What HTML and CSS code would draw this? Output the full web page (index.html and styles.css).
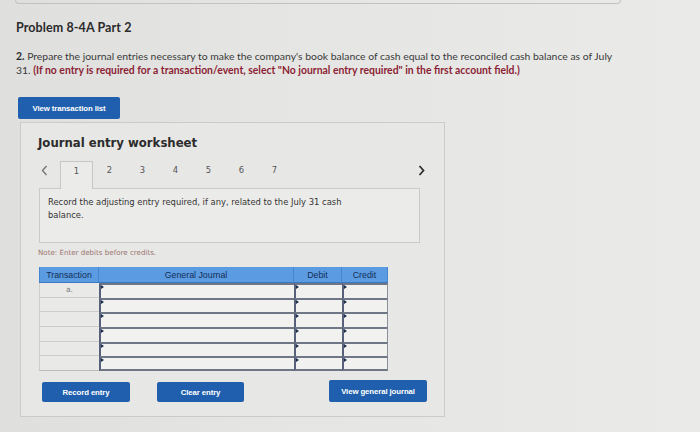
FILE: index.html
```html
<!DOCTYPE html>
<html lang="en">
<head>
<meta charset="utf-8">
<title>Problem 8-4A Part 2</title>
<link rel="stylesheet" href="styles.css">
</head>
<body>
<div class="topbox"></div>
<h1 class="title">Problem 8-4A Part 2</h1>
<p class="question"><b>2.</b> Prepare the journal entries necessary to make the company's book balance of cash equal to the reconciled cash balance as of July 31. <b class="req">(If no entry is required for a transaction/event, select "No journal entry required" in the first account field.)</b></p>
<button class="btn btn-list">View transaction list</button>
<section class="panel">
  <h2 class="ws-title">Journal entry worksheet</h2>
  <div class="tabs">
    <span class="nav prev"><svg width="7" height="11" viewBox="0 0 7 11"><polyline points="5.5,1 1.5,5.5 5.5,10" fill="none" stroke="#707070" stroke-width="1.3"/></svg></span>
    <span class="tab active">1</span>
    <span class="tab">2</span>
    <span class="tab">3</span>
    <span class="tab">4</span>
    <span class="tab">5</span>
    <span class="tab">6</span>
    <span class="tab">7</span>
    <span class="nav next"><svg width="7" height="11" viewBox="0 0 7 11"><polyline points="1.5,1 5.5,5.5 1.5,10" fill="none" stroke="#2e2e2e" stroke-width="1.8"/></svg></span>
  </div>
  <div class="instr"><p>Record the adjusting entry required, if any, related to the July 31 cash balance.</p></div>
  <p class="note">Note: Enter debits before credits.</p>
  <div class="journal">
    <div class="th">Transaction</div>
    <div class="th">General Journal</div>
    <div class="th">Debit</div>
    <div class="th last">Credit</div>

    <div class="tc">a.</div><div class="in"></div><div class="in"></div><div class="in cr"></div>
    <div class="tc"></div><div class="in"></div><div class="in"></div><div class="in cr"></div>
    <div class="tc"></div><div class="in"></div><div class="in"></div><div class="in cr"></div>
    <div class="tc"></div><div class="in"></div><div class="in"></div><div class="in cr"></div>
    <div class="tc"></div><div class="in"></div><div class="in"></div><div class="in cr"></div>
    <div class="tc lastrow"></div><div class="in lastrow"></div><div class="in lastrow"></div><div class="in cr lastrow"></div>
  </div>
  <div class="actions">
    <button class="btn btn-record">Record entry</button>
    <button class="btn btn-clear">Clear entry</button>
    <button class="btn btn-view">View general journal</button>
  </div>
</section>
</body>
</html>
```
FILE: styles.css
```css
* { box-sizing: border-box; }
html, body { margin: 0; padding: 0; }
body {
  width: 700px;
  height: 432px;
  overflow: hidden;
  background: linear-gradient(90deg, #dfdfdd 0%, #e5e5e3 40%, #eaeae8 100%);
  font-family: "Lato", "Liberation Sans", sans-serif;
  color: #2b2b2b;
}
.topbox {
  margin-left: 15px;
  width: 606px;
  height: 4px;
  border: 1px solid #c2c2c0;
  border-top: none;
  border-radius: 0 0 4px 4px;
}
.title {
  margin: 16px 0 0 16px;
  font-family: "Lato", sans-serif;
  font-size: 12.5px;
  line-height: 16px;
  font-weight: 700;
  color: #2a2a2a;
  letter-spacing: 0.1px;
}
.question {
  margin: 13px 0 0 16px;
  width: 604px;
  font-family: "Lato", sans-serif;
  font-size: 10.4px;
  line-height: 14px;
  color: #3a3a3a;
}
.question b { font-weight: 700; color: #2a2a2a; }
.question .req { color: #8c1f35; }
.btn {
  display: flex;
  align-items: center;
  justify-content: center;
  border: none;
  border-radius: 2px;
  background: #1f5fad;
  color: #ffffff;
  font-family: "Liberation Sans", Arial, sans-serif;
  font-weight: 700;
  font-size: 7.8px;
  padding: 0;
  letter-spacing: -0.1px;
}
.btn-list {
  margin: 20px 0 0 18px;
  width: 102px;
  height: 22px;
}
.panel {
  margin: 3px 0 0 20px;
  width: 425px;
  height: 295px;
  border: 1px solid #cbcbc9;
  background: #e7e7e5;
  padding: 12px 0 0 18px;
}
.ws-title {
  margin: 0 0 0 -1px;
  font-family: "DejaVu Sans", Verdana, sans-serif;
  font-size: 11.7px;
  line-height: 16px;
  font-weight: 700;
  color: #2c2c2c;
}
.tabs {
  margin-top: 10px;
  width: 387px;
  height: 27px;
  display: flex;
  align-items: flex-start;
  position: relative;
  z-index: 1;
  font-family: "DejaVu Sans", Verdana, sans-serif;
  font-size: 8.4px;
  color: #555;
}
.nav {
  display: flex;
  align-items: center;
  height: 18px;
}
.prev { width: 21px; padding-left: 2px; }
.next { margin-left: auto; width: 8px; }
.tab {
  width: 33px;
  height: 27px;
  line-height: 18px;
  text-align: center;
}
.tab.active {
  border: 1px solid #c6c6c4;
  border-bottom: none;
  background: #ebebe9;
  height: 28px;
  margin-bottom: -1px;
}
.instr {
  width: 381px;
  height: 55px;
  border: 1px solid #cacac8;
  background: #ebebe9;
  padding: 7px 0 0 8px;
}
.instr p {
  margin: 0;
  width: 310px;
  font-family: "DejaVu Sans", Verdana, sans-serif;
  font-size: 8.4px;
  line-height: 13px;
  color: #333;
}
.note {
  margin: 5px 0 0 -1px;
  font-family: "DejaVu Sans", Verdana, sans-serif;
  font-size: 7.1px;
  line-height: 10px;
  color: #9b7470;
}
.journal {
  margin-top: 9px;
  width: 349px;
  height: 104px;
  display: grid;
  grid-template-columns: 60px 195px 48px 46px;
  grid-template-rows: 16px repeat(6, 1fr);
}
.th {
  background: #5b9be2;
  border-right: 1px solid #4585d0;
  border-bottom: 1px solid #3a78c4;
  display: flex;
  align-items: center;
  justify-content: center;
  font-family: "Liberation Sans", Arial, sans-serif;
  font-size: 8.8px;
  color: #132f55;
}
.th:first-child { border-left: 1px solid #4585d0; }
.th.last { border-right: 1px solid #4585d0; }
.tc {
  background: #e9e9e7;
  border-left: 1px solid #cdcdcb;
  border-bottom: 1px solid #cdcdcb;
  display: flex;
  align-items: center;
  justify-content: center;
  font-family: "DejaVu Sans", Verdana, sans-serif;
  font-size: 7.5px;
  color: #7e7e7e;
}
.in {
  position: relative;
  background: #f1f1ef;
  border-top: 2px solid #6f7787;
  border-left: 2px solid #56607a;
}
.in::before {
  content: "";
  position: absolute;
  top: 0;
  left: 0;
  width: 0;
  height: 0;
  border-left: 3px solid #1c2d4c;
  border-top: 2px solid transparent;
  border-bottom: 2px solid transparent;
}
.in.cr { border-right: 1px solid #8a909c; }
.in.lastrow { border-bottom: 2px solid #6f7787; }
.tc.lastrow { border-bottom: 1px solid #bdbdbb; }
.actions {
  margin-top: 11px;
  margin-left: 3px;
  width: 385px;
  display: flex;
  align-items: flex-start;
}
.btn-record { width: 88px; height: 20px; }
.btn-clear { width: 87px; height: 20px; margin-left: 27px; }
.btn-view { width: 98px; height: 22px; margin-left: auto; margin-top: -2px; }
```
